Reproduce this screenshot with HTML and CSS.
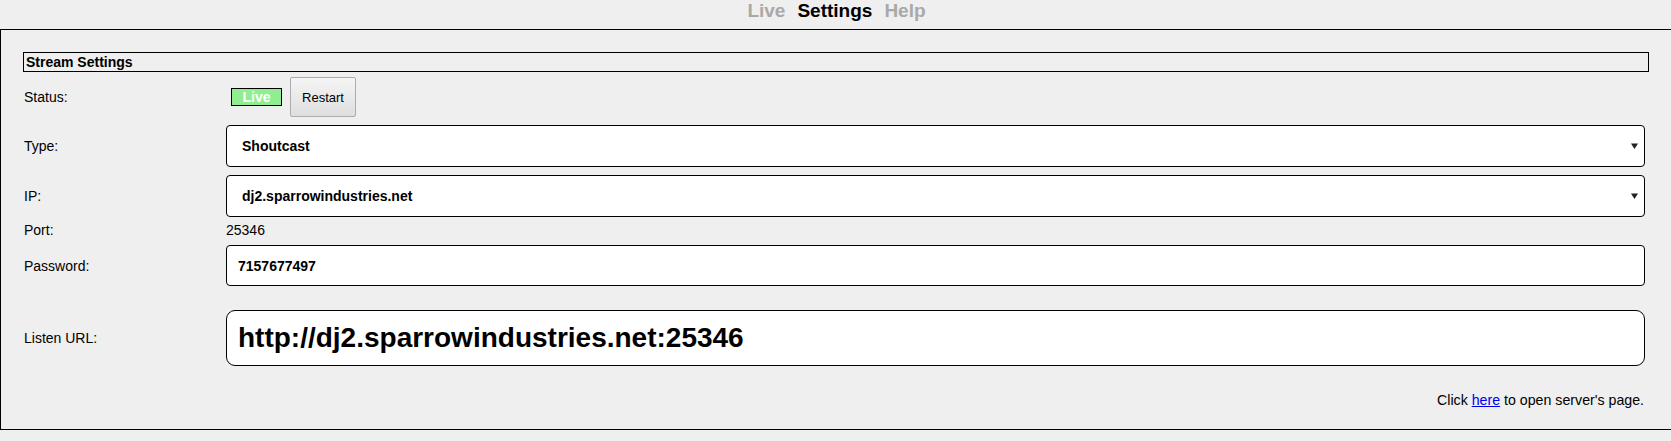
FILE: index.html
```html
<!DOCTYPE html>
<html>
<head>
<meta charset="utf-8">
<title>Settings</title>
<link rel="stylesheet" href="styles.css">
</head>
<body>
<nav class="tabs">
  <a class="tab">Live</a>
  <a class="tab active">Settings</a>
  <a class="tab">Help</a>
</nav>
<div class="panel">
  <div class="section-title">Stream Settings</div>

  <div class="row row-status">
    <span class="label">Status:</span>
    <div class="value status-value">
      <span class="badge">Live</span>
      <button class="btn">Restart</button>
    </div>
  </div>

  <div class="row row-field">
    <span class="label">Type:</span>
    <div class="value">
      <div class="select"><span class="select-text">Shoutcast</span>
        <svg class="arrow" width="7" height="6" viewBox="0 0 7 6"><path d="M0 0.5 H7 L3.5 6 Z" fill="#222"/></svg>
      </div>
    </div>
  </div>

  <div class="row row-field">
    <span class="label">IP:</span>
    <div class="value">
      <div class="select"><span class="select-text">dj2.sparrowindustries.net</span>
        <svg class="arrow" width="7" height="6" viewBox="0 0 7 6"><path d="M0 0.5 H7 L3.5 6 Z" fill="#222"/></svg>
      </div>
    </div>
  </div>

  <div class="row row-port">
    <span class="label">Port:</span>
    <div class="value plain">25346</div>
  </div>

  <div class="row row-pass">
    <span class="label">Password:</span>
    <div class="value">
      <div class="input">7157677497</div>
    </div>
  </div>

  <div class="row row-url">
    <span class="label">Listen URL:</span>
    <div class="value">
      <div class="input url">http://dj2.sparrowindustries.net:25346</div>
    </div>
  </div>

  <div class="footer">Click <a class="link" href="#">here</a> to open server's page.</div>
</div>
</body>
</html>
```
FILE: styles.css
```css
html, body {
  margin: 0;
  padding: 0;
}
body {
  background: #efefef;
  font-family: "Liberation Sans", Arial, sans-serif;
  font-size: 14px;
  color: #000;
}
.tabs {
  height: 29px;
  display: flex;
  justify-content: center;
  align-items: flex-start;
  gap: 12px;
  padding-left: 2px;
  font-size: 19px;
  font-weight: bold;
  line-height: 22px;
}
.tab {
  color: #a9a9a9;
}
.tab.active {
  color: #000;
}
.panel {
  border-top: 1px solid #000;
  border-left: 1px solid #000;
  border-bottom: 1px solid #000;
  padding: 22px 22px 21px 22px;
  display: flex;
  flex-direction: column;
}
.section-title {
  border: 1px solid #000;
  height: 18px;
  line-height: 18px;
  padding-left: 2px;
  font-weight: bold;
  font-size: 14px;
}
.row {
  display: flex;
  align-items: center;
  padding-right: 4px;
}
.label {
  box-sizing: border-box;
  width: 203px;
  padding-left: 1px;
  flex: none;
  line-height: 16px;
}
.value {
  flex: 1;
  min-width: 0;
}
.row-status {
  margin-top: 5px;
  height: 40px;
}
.status-value {
  display: flex;
  align-items: center;
  height: 40px;
}
.badge {
  box-sizing: border-box;
  width: 51px;
  height: 18px;
  margin-left: 5px;
  border: 1px solid #000;
  background: #90ee90;
  color: #fff;
  font-weight: bold;
  font-size: 14px;
  line-height: 16px;
  text-align: center;
}
.btn {
  box-sizing: border-box;
  margin-left: 8px;
  width: 66px;
  height: 40px;
  padding: 0;
  border: 1px solid #acacac;
  border-radius: 2px;
  background: linear-gradient(#f5f5f5, #dedede);
  font-family: "Liberation Sans", Arial, sans-serif;
  font-size: 13px;
  color: #000;
}
.row-field {
  margin-top: 8px;
  height: 42px;
}
.select {
  box-sizing: border-box;
  height: 42px;
  border: 1px solid #000;
  border-radius: 4px;
  background: #fff;
  display: flex;
  align-items: center;
  justify-content: space-between;
  padding: 0 6px 0 15px;
  font-weight: bold;
}
.arrow {
  display: block;
}
.row-port {
  margin-top: 3px;
  height: 20px;
}
.plain {
  line-height: 16px;
}
.row-pass {
  margin-top: 5px;
  height: 41px;
}
.input {
  box-sizing: border-box;
  height: 41px;
  border: 1px solid #000;
  border-radius: 4px;
  background: #fff;
  display: flex;
  align-items: center;
  padding-left: 11px;
  font-weight: bold;
}
.row-url {
  margin-top: 24px;
  height: 56px;
}
.input.url {
  height: 56px;
  border-radius: 9px;
  font-size: 28px;
}
.footer {
  margin-top: 26px;
  line-height: 16px;
  text-align: right;
  padding-right: 5px;
  font-size: 14.2px;
}
.link {
  color: #0000ee;
  text-decoration: underline;
}
```
